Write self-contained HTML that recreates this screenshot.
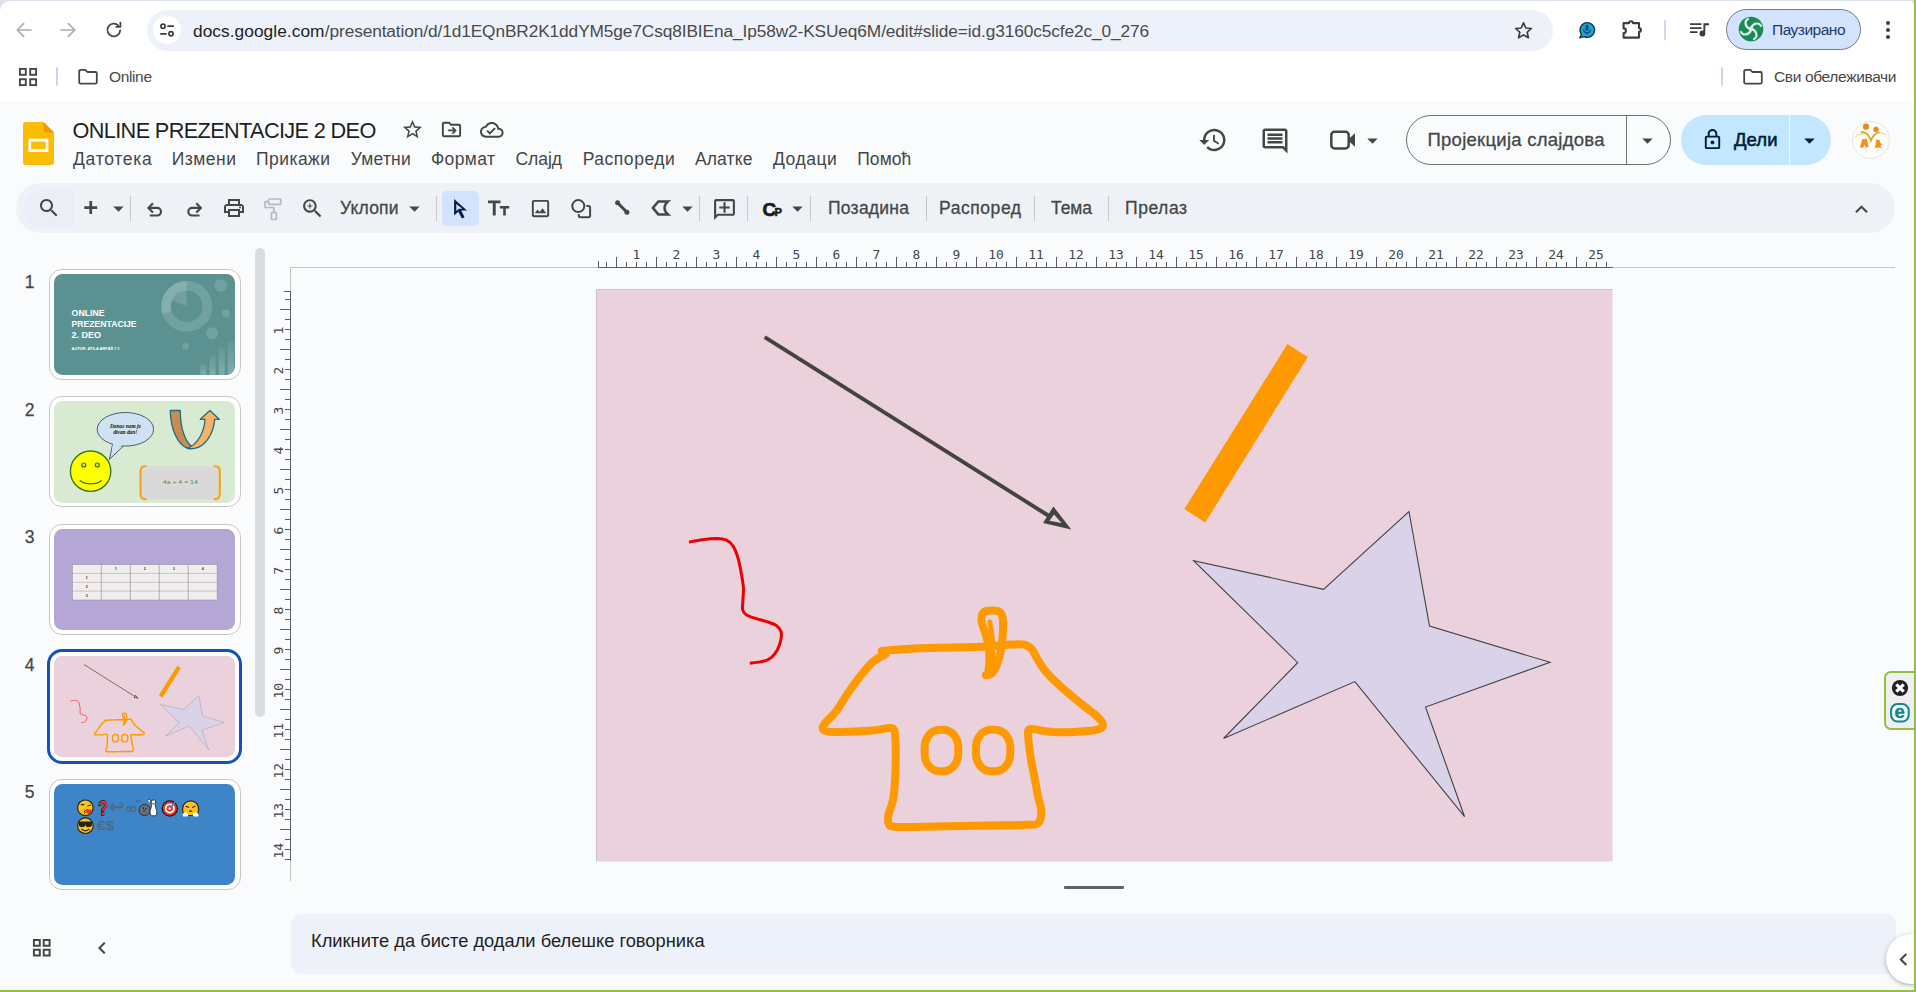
<!DOCTYPE html>
<html lang="sr">
<head>
<meta charset="utf-8">
<title>ONLINE PREZENTACIJE 2 DEO</title>
<style>
*{box-sizing:border-box;margin:0;padding:0}
html,body{width:1916px;height:992px;overflow:hidden;background:#f9fbfd}
body{position:relative;font-family:"Liberation Sans",sans-serif;color:#1f1f1f}
.a{position:absolute}
.t{position:absolute;white-space:nowrap;font-family:"Liberation Sans",sans-serif}
svg{position:absolute;overflow:visible}
.sep{position:absolute;width:1px;background:#c7c7c7}
.mono{font-family:"DejaVu Sans Mono","Liberation Mono",monospace}
.fo{position:absolute;left:49px;width:191.5px;height:111px;border:1px solid #c9c6c6;border-radius:13px;background:#fff}
.fi{position:absolute;left:54.2px;width:181.2px;height:101.6px;border-radius:8.5px;overflow:hidden}
.fn{position:absolute;left:18.6px;-webkit-text-stroke:0.25px #444746;width:22px;text-align:center;font-size:17.5px;line-height:22px;color:#444746}
</style>
</head>
<body>
<!-- ===== Browser chrome ===== -->
<div class="a" style="left:0;top:0;width:1916px;height:102px;background:#dbe2ee"></div>
<div class="a" style="left:0;top:1px;width:1914px;height:101px;background:#fff;border-radius:10px 5px 0 0"></div>
<!-- nav arrows -->
<svg style="left:14px;top:20px;width:20px;height:20px" viewBox="0 0 20 20" fill="none" stroke="#a9acb1" stroke-width="1.7" stroke-linecap="round" stroke-linejoin="round"><path d="M17 10H3.4M9.6 3.6 3.2 10l6.4 6.4"/></svg>
<svg style="left:58px;top:20px;width:20px;height:20px" viewBox="0 0 20 20" fill="none" stroke="#a9acb1" stroke-width="1.7" stroke-linecap="round" stroke-linejoin="round"><path d="M3 10h13.6M10.4 3.6l6.4 6.4-6.4 6.4"/></svg>
<svg style="left:104px;top:20px;width:20px;height:20px" viewBox="0 0 20 20" fill="none" stroke="#474747" stroke-width="1.8" stroke-linecap="round" stroke-linejoin="round"><path d="M16.2 10.4a6.4 6.4 0 1 1-2-5.1"/><path d="M16.4 2.6v4.2h-4.2" /></svg>
<!-- omnibox -->
<div class="a" style="left:147px;top:9.5px;width:1406px;height:41px;border-radius:20.5px;background:#edf1fa"></div>
<div class="a" style="left:153px;top:16px;width:28px;height:28px;border-radius:14px;background:#fff"></div>
<svg style="left:157px;top:20px;width:20px;height:20px" viewBox="0 0 20 20" fill="none" stroke="#3c3c3c" stroke-width="1.7" stroke-linecap="round"><circle cx="6" cy="6.2" r="2.1"/><path d="M11 6.2h5.2"/><circle cx="14" cy="13.8" r="2.1"/><path d="M3.8 13.8H9"/></svg>
<span class="t" style="left:193.00px;top:20.30px;font-size:17.3px;line-height:22px;letter-spacing:0.058px;color:#1f1f1f;font-weight:400;">docs.google.com</span>
<span class="t" style="left:324.80px;top:20.30px;font-size:17.3px;line-height:22px;letter-spacing:-0.110px;color:#4a4a4a;font-weight:400;">/presentation/d/1d1EQnBR2K1ddYM5ge7Csq8IBIEna_Ip58w2-KSUeq6M/edit#slide=id.g3160c5cfe2c_0_276</span>
<!-- star -->
<svg style="left:1513px;top:19.5px;width:21px;height:21px" viewBox="0 0 24 24" fill="none" stroke="#3c3c3c" stroke-width="1.9" stroke-linejoin="round"><path d="M12 3.2l2.6 5.9 6.4.6-4.8 4.3 1.4 6.3L12 17l-5.6 3.3 1.4-6.3L3 9.7l6.4-.6z"/></svg>
<!-- extension 1 : mic bubble -->
<svg style="left:1574.9px;top:18px;width:24px;height:24px" viewBox="0 0 24 24"><path d="M6.3 16.200000000000003A7.3 7.3 0 1 1 9.1 18.6L4.7 19.900000000000002z" fill="#14a7c8" stroke="#16303f" stroke-width="1.3" stroke-linejoin="round"/><rect x="10.6" y="6.8" width="2.8" height="6" rx="1.4" fill="#12348c"/><path d="M8.700000000000001 11.4a3.3 3.3 0 0 0 6.6 0" fill="none" stroke="#12348c" stroke-width="1.1"/><path d="M12 14.700000000000001v1.9" stroke="#12348c" stroke-width="1.1"/></svg>
<!-- puzzle -->
<svg style="left:1619px;top:18px;width:24px;height:24px" viewBox="0 0 24 24" fill="none" stroke="#3c3c3c" stroke-width="2.1" stroke-linejoin="round"><path d="M4.6 5.1h5.500000000000001a1.9 1.9 0 0 1 3.8 0h6.1v5.000000000000001a1.9 1.9 0 0 1 0 3.8V19.6H4.6v-4.6a2.300000000000001 2.300000000000001 0 0 0 0-4.6z"/></svg>
<div class="a" style="left:1664px;top:20px;width:2px;height:20px;background:#ccd8ee;border-radius:1px"></div>
<!-- media control -->
<svg style="left:1687px;top:17px;width:24px;height:24px" viewBox="0 0 24 24" fill="#3c3c3c"><path d="M3 6.2h11.5v1.9H3zM3 10.2h11.5v1.9H3zM3 14.2h7.5v1.9H3z"/><path d="M16.4 6.2H22v2h-3.7v8.3a2.9 2.9 0 1 1-1.9-2.7z"/></svg>
<!-- profile pill -->
<div class="a" style="left:1726px;top:9px;width:135px;height:41px;border-radius:20.5px;background:#d3e3fd;border:1px solid #6c7a92"></div>
<svg style="left:1738px;top:16px;width:26px;height:26px" viewBox="-13 -13 26 26"><circle r="12.3" fill="#1a8a56"/><g fill="none" stroke="#d8f0e2" stroke-width="2.2" stroke-linecap="round"><path d="M0-1C2-6 8-7 10-3"/><path d="M1 0C6 2 7 8 3 10"/><path d="M0 1C-2 6-8 7-10 3"/><path d="M-1 0C-6-2-7-8-3-10"/></g><circle r="2.2" fill="#d8f0e2"/></svg>
<span class="t" style="left:1772.00px;top:19.50px;font-size:15.5px;line-height:20px;letter-spacing:-0.503px;color:#1b3a6b;font-weight:400;">Паузирано</span>

<svg style="left:1884px;top:18px;width:8px;height:24px" viewBox="0 0 8 24" fill="#3c3c3c"><circle cx="4" cy="5" r="2"/><circle cx="4" cy="12" r="2"/><circle cx="4" cy="19" r="2"/></svg>
<!-- bookmarks bar -->
<svg style="left:17px;top:66px;width:22px;height:22px" viewBox="0 0 22 22" fill="none" stroke="#474747" stroke-width="1.9"><rect x="2.9" y="2.9" width="5.9" height="5.9"/><rect x="13.2" y="2.9" width="5.9" height="5.9"/><rect x="2.9" y="13.2" width="5.9" height="5.9"/><rect x="13.2" y="13.2" width="5.9" height="5.9"/></svg>
<div class="a" style="left:56px;top:67px;width:2px;height:19px;background:#c9d7ee;border-radius:1px"></div>
<svg style="left:77px;top:66px;width:22px;height:22px" viewBox="0 0 22 22" fill="none" stroke="#474747" stroke-width="1.8" stroke-linejoin="round"><path d="M2.2 5.2a1.4 1.4 0 0 1 1.4-1.4h4.7l2.1 2.2h8a1.4 1.4 0 0 1 1.4 1.4v8.800000000000001a1.4 1.4 0 0 1-1.4 1.4H3.6a1.4 1.4 0 0 1-1.4-1.4z"/></svg>
<span class="t" style="left:109.00px;top:67.00px;font-size:15.5px;line-height:20px;letter-spacing:-0.361px;color:#474747;font-weight:400;">Online</span>
<div class="a" style="left:1721px;top:67px;width:2px;height:19px;background:#c9d7ee;border-radius:1px"></div>
<svg style="left:1742px;top:66px;width:22px;height:22px" viewBox="0 0 22 22" fill="none" stroke="#474747" stroke-width="1.8" stroke-linejoin="round"><path d="M2.2 5.2a1.4 1.4 0 0 1 1.4-1.4h4.7l2.1 2.2h8a1.4 1.4 0 0 1 1.4 1.4v8.8a1.4 1.4 0 0 1-1.4 1.4H3.6a1.4 1.4 0 0 1-1.4-1.4z"/></svg>
<span class="t" style="left:1774.00px;top:67.00px;font-size:15.5px;line-height:20px;letter-spacing:-0.351px;color:#474747;font-weight:400;">Сви обележивачи</span>
<!-- ===== App header ===== -->
<!-- Slides logo -->
<svg style="left:23px;top:122px;width:31px;height:43px" viewBox="0 0 31 43"><path d="M3 0h17.5L31 10.5V40a3 3 0 0 1-3 3H3a3 3 0 0 1-3-3V3a3 3 0 0 1 3-3z" fill="#fbbc04"/><path d="M20.5 0 31 10.500000000000001h-7.500000000000001a3 3 0 0 1-3-3z" fill="#f29900"/><path d="M5.4 16.8h20v13.200000000000001h-20zm2.700000000000001 2.700000000000001v7.800000000000001h14.6v-7.800000000000001z" fill="#fff" fill-rule="evenodd"/></svg>
<span class="t" style="left:72.50px;top:116.70px;font-size:21.7px;line-height:28px;letter-spacing:-0.631px;color:#1f1f1f;font-weight:400;">ONLINE PREZENTACIJE 2 DEO</span>
<svg style="left:400.5px;top:117.9px;width:23px;height:23px" viewBox="0 0 24 24" fill="#444746"><path d="M22 9.24l-7.19-.62L12 2 9.19 8.63 2 9.24l5.46 4.73L5.82 21 12 17.27 18.18 21l-1.63-7.03L22 9.240000000000002zM12 15.4l-3.76 2.27 1-4.28-3.32-2.88 4.38-.38L12 6.1l1.71 4.04 4.380000000000001.38-3.32 2.88 1 4.28L12 15.4z"/></svg>
<svg style="left:440px;top:118px;width:23px;height:23px" viewBox="0 0 24 24" fill="#444746"><path d="M20 6h-8l-2-2H4c-1.1 0-2 .9-2 2v12c0 1.1.9 2 2 2h16c1.1 0 2-.9 2-2V8c0-1.1-.9-2-2-2zm0 12H4V6h5.17l2 2H20v10z"/><path d="M13.6 16.9l3.9-3.9-3.9-3.9-1.3 1.3 1.7 1.7H8.5v1.8H14l-1.7 1.7z"/></svg>
<svg style="left:480px;top:118.4px;width:23.6px;height:23.6px" viewBox="0 0 24 24" fill="#444746"><path d="M19.35 10.04C18.67 6.59 15.64 4 12 4 9.11 4 6.6 5.64 5.35 8.04 2.34 8.36 0 10.91 0 14c0 3.31 2.69 6 6 6h13c2.76 0 5-2.24 5-5 0-2.64-2.05-4.78-4.65-4.96zM19 18H6c-2.21 0-4-1.79-4-4 0-2.05 1.53-3.76 3.56-3.97l1.07-.11.5-.95C8.08 7.14 9.94 6 12 6c2.62 0 4.88 1.86 5.39 4.43l.3 1.5 1.53.11c1.56.1 2.78 1.41 2.78 2.96 0 1.65-1.35 3-3 3zm-9-3.82l-2.09-2.09L6.5 13.5 10 17l6.01-6.01-1.41-1.41z"/></svg>
<!-- menus -->
<span class="t" style="left:73.00px;top:147.50px;font-size:17.5px;line-height:23px;letter-spacing:0.729px;color:#444746;font-weight:400;">Датотека</span>
<span class="t" style="left:171.80px;top:147.50px;font-size:17.5px;line-height:23px;letter-spacing:0.479px;color:#444746;font-weight:400;">Измени</span>
<span class="t" style="left:256.00px;top:147.50px;font-size:17.5px;line-height:23px;letter-spacing:0.443px;color:#444746;font-weight:400;">Прикажи</span>
<span class="t" style="left:350.70px;top:147.50px;font-size:17.5px;line-height:23px;letter-spacing:0.226px;color:#444746;font-weight:400;">Уметни</span>
<span class="t" style="left:430.90px;top:147.50px;font-size:17.5px;line-height:23px;letter-spacing:0.387px;color:#444746;font-weight:400;">Формат</span>
<span class="t" style="left:515.50px;top:147.50px;font-size:17.5px;line-height:23px;letter-spacing:-0.046px;color:#444746;font-weight:400;">Слајд</span>
<span class="t" style="left:582.70px;top:147.50px;font-size:17.5px;line-height:23px;letter-spacing:0.531px;color:#444746;font-weight:400;">Распореди</span>
<span class="t" style="left:694.90px;top:147.50px;font-size:17.5px;line-height:23px;letter-spacing:0.153px;color:#444746;font-weight:400;">Алатке</span>
<span class="t" style="left:773.00px;top:147.50px;font-size:17.5px;line-height:23px;letter-spacing:0.512px;color:#444746;font-weight:400;">Додаци</span>
<span class="t" style="left:857.20px;top:147.50px;font-size:17.5px;line-height:23px;letter-spacing:0.073px;color:#444746;font-weight:400;">Помоћ</span>
<!-- right header icons -->
<svg style="left:1197.5px;top:124.5px;width:30px;height:30px" viewBox="0 0 24 24" fill="#444746"><path d="M13 3c-4.97 0-9 4.03-9 9H1l3.89 3.89.07.14L9 12H6c0-3.87 3.13-7 7-7s7 3.13 7 7-3.13 7-7 7c-1.93 0-3.68-.79-4.94-2.06l-1.42 1.42C8.27 19.99 10.51 21 13 21c4.97 0 9-4.03 9-9s-4.03-9-9-9zm-1 5v5l4.28 2.54.72-1.21-3.5-2.08V8H12z"/></svg>
<svg style="left:1260px;top:125.5px;width:30px;height:30px" viewBox="0 0 24 24" fill="#444746"><path d="M21.99 4c0-1.1-.89-2-1.990000000000002-2H4c-1.1 0-2 .9-2 2v12c0 1.1.9 2 2 2h14l4 4-.01-18zM20 4v13.17L18.830000000000002 16H4V4h16zM6 12h12v2H6zm0-3h12v2H6zm0-3h12v2H6z"/></svg>
<svg style="left:1326px;top:125px;width:30px;height:30px" viewBox="0 0 30 30"><rect x="5.3" y="6.8" width="17.4" height="16.6" rx="3.2" fill="none" stroke="#444746" stroke-width="2.5"/><path d="M21.5 15 29 8.2v13.6z" fill="#444746"/></svg>
<svg style="left:1360px;top:127.5px;width:25px;height:25px" viewBox="0 0 24 24" fill="#444746"><path d="M7 10l5 5 5-5z"/></svg>
<!-- slideshow button -->
<div class="a" style="left:1406px;top:115px;width:265px;height:50px;border-radius:25px;border:1.2px solid #6d706f"></div>
<div class="a" style="left:1625.5px;top:115px;width:1px;height:50px;background:#747775"></div>
<span class="t" style="left:1427.50px;top:128.00px;font-size:18.5px;line-height:24px;letter-spacing:0.262px;color:#444746;font-weight:400;-webkit-text-stroke:0.3px #444746">Пројекција слајдова</span>
<svg style="left:1634.5px;top:127.5px;width:25px;height:25px" viewBox="0 0 24 24" fill="#444746"><path d="M7 10l5 5 5-5z"/></svg>
<!-- share button -->
<div class="a" style="left:1681px;top:115px;width:150px;height:50px;border-radius:25px;background:#c2e7ff"></div>
<div class="a" style="left:1788.5px;top:115px;width:1px;height:50px;background:#f3f9ff"></div>
<svg style="left:1701px;top:128.2px;width:23px;height:23px" viewBox="0 0 24 24" fill="#001d35"><path d="M18 8h-1V6c0-2.76-2.24-5-5-5S7 3.24 7 6v2H6c-1.1 0-2 .9-2 2v10c0 1.1.9 2 2 2h12c1.1 0 2-.9 2-2V10c0-1.1-.9-2-2-2zM9 6c0-1.660000000000001 1.34-3 3-3s3 1.34 3 3v2H9V6zm9 14H6V10h12v10zm-6-3c1.1 0 2-.9 2-2s-.9-2-2-2-2 .9-2 2 .9 2 2 2z"/></svg>
<span class="t" style="left:1734.00px;top:128.00px;font-size:18.5px;line-height:24px;letter-spacing:0.056px;color:#001d35;font-weight:400;-webkit-text-stroke:0.55px #001d35">Дели</span>
<svg style="left:1796.5px;top:127.5px;width:25px;height:25px" viewBox="0 0 24 24" fill="#001d35"><path d="M7 10l5 5 5-5z"/></svg>
<!-- avatar -->
<svg style="left:1851px;top:120px;width:40px;height:40px" viewBox="1851 120 40 40"><circle cx="1870.9" cy="139.9" r="18.4" fill="#fffefb" stroke="#e6e0da" stroke-width="0.9"/><g fill="#f18a12"><circle cx="1866" cy="126.7" r="3.1"/><circle cx="1876" cy="129.4" r="2.7"/><path d="M1862.4 139.200000000000003l4.200000000000001-.4 2 8.000000000000002-2.800000000000001.6-1.2-2.600000000000001-1.400000000000001 3-3.400000000000001-.4z" fill-opacity=".95"/><path d="M1876.4 139.6l3.2.4.8 3.2 2.200000000000001.8-2 1.400000000000001.6 2.800000000000001-3.2-.8-3.000000000000001.8z" fill-opacity=".95"/></g><path d="M1861.6 131.8c4.200000000000001.2 7.6 3.2 9.4 8.8 1.6-5 4.4-7.4 8.000000000000002-8.200000000000001" fill="none" stroke="#dca21a" stroke-width="1.7" stroke-linecap="round"/><path d="M1855.6 136.6c3-2.600000000000001 6.800000000000001-3.600000000000001 10.4-2.400000000000001M1886 135c-2.800000000000001-2.200000000000001-6.200000000000001-2.600000000000001-9.4-1.200000000000001" fill="none" stroke="#f3c79a" stroke-width="1.1" stroke-linecap="round" stroke-opacity=".8"/><path d="M1865.6 148.200000000000003l.8 4.400000000000001M1877.6 149l-.8 3.600000000000001M1881.2 147.200000000000003l1.600000000000001 3" fill="none" stroke="#ead9e6" stroke-width="1" stroke-linecap="round"/></svg>
<!-- ===== Toolbar ===== -->
<div class="a" style="left:16px;top:183px;width:1879px;height:50px;border-radius:25px;background:#eef2f7"></div>
<div class="a" style="left:22.5px;top:189.5px;width:51px;height:37.5px;border-radius:18.75px 5px 5px 18.75px;background:#eaeff7"></div>
<svg style="left:37.4px;top:196.2px;width:24px;height:24px" viewBox="0 0 24 24" fill="#444746"><path d="M15.5 14h-.79l-.28-.27C15.41 12.59 16 11.11 16 9.5 16 5.91 13.09 3 9.5 3S3 5.91 3 9.5 5.91 16 9.5 16c1.61 0 3.09-.59 4.23-1.57l.27.28v.79l5 4.99L20.49 19l-4.99-5zm-6 0C7.01 14 5 11.99 5 9.5S7.01 5 9.5 5 14 7.01 14 9.5 11.99 14 9.5 14z"/></svg>
<svg style="left:78px;top:195px;width:25px;height:25px" viewBox="78 195 25 25" fill="#444746"><path d="M84.3 206.2h5.1v-5.1h2.7v5.1h5.1v2.7h-5.1v5.1h-2.7v-5.1h-5.1z"/></svg>
<svg style="left:105.7px;top:196px;width:25px;height:25px" viewBox="0 0 24 24" fill="#444746"><path d="M7 10l5 5 5-5z"/></svg>
<div class="sep" style="left:130px;top:196px;height:25px"></div>
<!-- undo / redo -->
<svg style="left:140px;top:195px;width:70px;height:26px" viewBox="140 195 70 26" fill="none" stroke="#444746" stroke-width="2.1" stroke-linejoin="miter"><path d="M153 203.2 148.400000000000002 207.9 153 212.6"/><path d="M149 207.9h8.200000000000001a3.8 3.8 0 0 1 0 7.6H149.8"/><path d="M196.3 203.2 200.9 207.9 196.3 212.6"/><path d="M200.3 207.9h-8.200000000000001a3.8 3.8 0 0 0 0 7.6h7.4"/></svg>
<svg style="left:221.7px;top:196.2px;width:24px;height:24px" viewBox="0 0 24 24" fill="#444746"><path d="M19 8h-1V3H6v5H5c-1.66 0-3 1.34-3 3v6h4v4h12v-4h4v-6c0-1.66-1.34-3-3-3zM8 5h8v3H8V5zm8 12v2H8v-4h8v2zm2-2v-2H6v2H4v-4c0-.55.45-1 1-1h14c.55 0 1 .45 1 1v4h-2z"/><circle cx="18" cy="11.5" r="1"/></svg>
<!-- paint format (disabled) -->
<svg style="left:260px;top:195px;width:26px;height:28px" viewBox="260 195 26 28" fill="none" stroke="#b7babf" stroke-width="1.7" stroke-linejoin="round"><rect x="268.6" y="199" width="12.2" height="5.4" rx="1"/><path d="M268.6 201.7h-3.600000000000001v5.800000000000001h8.8v5.000000000000001"/><rect x="271.4" y="212.7" width="5.000000000000001" height="6.800000000000001" rx=".8"/></svg>
<svg style="left:300px;top:195.5px;width:25px;height:25px" viewBox="0 0 24 24" fill="#444746"><path d="M15.5 14h-.79l-.28-.27C15.41 12.59 16 11.11 16 9.5 16 5.91 13.09 3 9.5 3S3 5.910000000000001 3 9.5 5.91 16 9.5 16c1.61 0 3.09-.59 4.23-1.57l.27.28v.79l5 4.99L20.49 19l-4.99-5zm-6 0C7.01 14 5 11.99 5 9.5S7.01 5 9.5 5 14 7.01 14 9.5 11.99 14 9.5 14zm.5-7H9v2H7v1h2v2h1v-2h2V9h-2z"/></svg>
<span class="t" style="left:340.00px;top:196.50px;font-size:17.5px;line-height:23px;letter-spacing:0.185px;color:#444746;font-weight:400;-webkit-text-stroke:0.3px #444746">Уклопи</span>
<svg style="left:401.5px;top:196px;width:25px;height:25px" viewBox="0 0 24 24" fill="#444746"><path d="M7 10l5 5 5-5z"/></svg>
<div class="sep" style="left:436px;top:196px;height:25px"></div>
<!-- select (active) -->
<div class="a" style="left:442px;top:190.5px;width:37px;height:35.5px;border-radius:5px;background:#d3e3fd"></div>
<svg style="left:449px;top:196px;width:24px;height:24px" viewBox="449 196 24 24"><path d="M454.1 198.9V215.6L458.3 211.8 461.9 218.6 464.6 217.2 461.2 210.5H467z" fill="#041e49"/><path d="M456.3 203.9V211L459 208.7H462.400000000000003z" fill="#d3e3fd"/></svg>
<!-- text box Tt -->
<svg style="left:486px;top:196px;width:25px;height:25px" viewBox="0 0 25 25" fill="#444746"><path d="M2 4.5h12.5v2.700000000000001H9.700000000000001V19.5H6.800000000000001V7.2H2zM13.8 10h9.4v2.5h-3.400000000000001v7h-2.600000000000001v-7H13.8z"/></svg>
<svg style="left:528.5px;top:197.1px;width:23px;height:23px" viewBox="0 0 24 24" fill="#444746"><path d="M19 5v14H5V5h14m0-2H5c-1.1 0-2 .9-2 2v14c0 1.1.9 2 2 2h14c1.1 0 2-.9 2-2V5c0-1.1-.9-2-2-2zm-4.86 8.86l-3 3.87L9 13.14 6 17h12l-3.86-5.14z"/></svg>
<!-- shapes -->
<svg style="left:569px;top:196px;width:25px;height:25px" viewBox="0 0 25 25" fill="none" stroke="#444746" stroke-width="2"><circle cx="9.3" cy="10.1" r="6"/><path d="M17.4 9.9h2.2a1.500000000000001 1.500000000000001 0 0 1 1.500000000000001 1.500000000000001v8.4a1.500000000000001 1.500000000000001 0 0 1-1.500000000000001 1.500000000000001H11.3a1.500000000000001 1.500000000000001 0 0 1-1.500000000000001-1.500000000000001V18"/></svg>
<!-- line -->
<svg style="left:609.5px;top:195.5px;width:25px;height:25px" viewBox="0 0 25 25" fill="#444746" stroke="#444746"><path d="M7.3 6.500000000000001 17.200000000000003 16.500000000000004" stroke-width="3.1" fill="none"/><circle cx="7.6" cy="6.8" r="2.5" stroke="none"/><circle cx="16.9" cy="16.2" r="2.5" stroke="none"/></svg>
<!-- special shape -->
<svg style="left:648px;top:195.5px;width:25px;height:25px" viewBox="0 0 25 25" fill="none" stroke="#444746" stroke-width="2.5" stroke-linejoin="miter"><path d="M20.000000000000004 5.4H10.3L4.9 11.9l5.4 6.500000000000001h9.700000000000001c-4.600000000000001-4-4.600000000000001-9 0-13z"/></svg>
<svg style="left:674.5px;top:196px;width:25px;height:25px" viewBox="0 0 24 24" fill="#444746"><path d="M7 10l5 5 5-5z"/></svg>
<div class="sep" style="left:699.3px;top:196px;height:25px"></div>
<!-- add comment -->
<svg style="left:711.5px;top:196.5px;width:25px;height:25px" viewBox="0 0 24 24" fill="#444746"><path d="M2 4c0-1.1.9-2 2-2h16c1.1 0 2 .9 2 2v12c0 1.1-.9 2-2 2H6l-4 4V4zm2 13.17L5.170000000000001 16H20V4H4v13.17zM11 5h2v4h4v2h-4v4h-2v-4H7V9h4z"/></svg>
<div class="sep" style="left:746.6px;top:196px;height:25px"></div>
<span class="t" style="left:762.5px;top:198.2px;font-size:18.8px;line-height:24px;font-weight:700;color:#1b1b1b;letter-spacing:-1.6px;-webkit-text-stroke:0.7px #1b1b1b">C<span style="font-size:11.2px;letter-spacing:0;-webkit-text-stroke:0.6px #1b1b1b">P</span></span>
<svg style="left:784.5px;top:196px;width:25px;height:25px" viewBox="0 0 24 24" fill="#444746"><path d="M7 10l5 5 5-5z"/></svg>
<div class="sep" style="left:809.8px;top:196px;height:25px"></div>
<span class="t" style="left:828.00px;top:196.50px;font-size:17.5px;line-height:23px;letter-spacing:0.249px;color:#444746;font-weight:400;-webkit-text-stroke:0.3px #444746">Позадина</span>
<div class="sep" style="left:925.5px;top:196px;height:25px"></div>
<span class="t" style="left:939.00px;top:196.50px;font-size:17.5px;line-height:23px;letter-spacing:0.560px;color:#444746;font-weight:400;-webkit-text-stroke:0.3px #444746">Распоред</span>
<div class="sep" style="left:1034px;top:196px;height:25px"></div>
<span class="t" style="left:1051.00px;top:196.50px;font-size:17.5px;line-height:23px;letter-spacing:-0.068px;color:#444746;font-weight:400;-webkit-text-stroke:0.3px #444746">Тема</span>
<div class="sep" style="left:1108px;top:196px;height:25px"></div>
<span class="t" style="left:1125.00px;top:196.50px;font-size:17.5px;line-height:23px;letter-spacing:0.553px;color:#444746;font-weight:400;-webkit-text-stroke:0.3px #444746">Прелаз</span>
<svg style="left:1848.5px;top:196.5px;width:25px;height:25px" viewBox="0 0 24 24" fill="#444746"><path d="M7.41 15.41L12 10.83l4.59 4.58L18 14l-6-6-6 6z"/></svg>
<!-- ===== Rulers ===== -->
<svg style="left:0;top:0;width:1916px;height:992px" viewBox="0 0 1916 992" shape-rendering="crispEdges">
<defs>
<pattern id="hticks" x="596" y="257" width="40" height="11" patternUnits="userSpaceOnUse"><path d="M10.5 5v6M20.5 0v11M30.5 5v6M0.5 5v6" stroke="#5b5f63" stroke-width="1" fill="none"/></pattern>
<pattern id="vticks" x="280" y="289" width="11" height="40" patternUnits="userSpaceOnUse"><path d="M5 10.5h6M0 20.5h11M5 30.5h6M5 0.5h6" stroke="#5b5f63" stroke-width="1" fill="none"/></pattern>
</defs>
<path d="M291 267.5H1895M290.5 267v614" stroke="#c4c7c5" stroke-width="1" fill="none"/>
<path d="M598 267.5H1613" stroke="#5b5f63" stroke-width="1" fill="none"/>
<path d="M290.5 291V861" stroke="#5b5f63" stroke-width="1" fill="none"/>
<rect x="601" y="257" width="1011" height="11" fill="url(#hticks)"/>
<path d="M598.5 261v6" stroke="#5b5f63" stroke-width="1"/>
<rect x="280" y="294" width="11" height="566" fill="url(#vticks)"/>
<path d="M284 291.5h6" stroke="#5b5f63" stroke-width="1"/>
</svg>
<svg style="left:0;top:0;width:1916px;height:992px" viewBox="0 0 1916 992" class="mono" font-size="12.9" fill="#444746" text-anchor="middle">
<text x="636.5" y="258.7">1</text>
<text x="676.5" y="258.7">2</text>
<text x="716.5" y="258.7">3</text>
<text x="756.5" y="258.7">4</text>
<text x="796.5" y="258.7">5</text>
<text x="836.5" y="258.7">6</text>
<text x="876.5" y="258.7">7</text>
<text x="916.5" y="258.7">8</text>
<text x="956.5" y="258.7">9</text>
<text x="996.0" y="258.7">10</text>
<text x="1036.0" y="258.7">11</text>
<text x="1076.0" y="258.7">12</text>
<text x="1116.0" y="258.7">13</text>
<text x="1156.0" y="258.7">14</text>
<text x="1196.0" y="258.7">15</text>
<text x="1236.0" y="258.7">16</text>
<text x="1276.0" y="258.7">17</text>
<text x="1316.0" y="258.7">18</text>
<text x="1356.0" y="258.7">19</text>
<text x="1396.0" y="258.7">20</text>
<text x="1436.0" y="258.7">21</text>
<text x="1476.0" y="258.7">22</text>
<text x="1516.0" y="258.7">23</text>
<text x="1556.0" y="258.7">24</text>
<text x="1596.0" y="258.7">25</text>
<text transform="translate(283.2 330.7) rotate(-90)">1</text>
<text transform="translate(283.2 370.7) rotate(-90)">2</text>
<text transform="translate(283.2 410.7) rotate(-90)">3</text>
<text transform="translate(283.2 450.7) rotate(-90)">4</text>
<text transform="translate(283.2 490.7) rotate(-90)">5</text>
<text transform="translate(283.2 530.7) rotate(-90)">6</text>
<text transform="translate(283.2 570.7) rotate(-90)">7</text>
<text transform="translate(283.2 610.7) rotate(-90)">8</text>
<text transform="translate(283.2 650.7) rotate(-90)">9</text>
<text transform="translate(283.2 690.7) rotate(-90)">10</text>
<text transform="translate(283.2 730.7) rotate(-90)">11</text>
<text transform="translate(283.2 770.7) rotate(-90)">12</text>
<text transform="translate(283.2 810.7) rotate(-90)">13</text>
<text transform="translate(283.2 850.7) rotate(-90)">14</text>
</svg>
<!-- ===== Main slide ===== -->
<svg style="left:0;top:0;width:1916px;height:992px" viewBox="0 0 1916 992">
<defs>
<g id="slideart">
<rect x="596.5" y="289.5" width="1016" height="572" fill="#ead1dc"/>
<!-- arrow -->
<path d="M764.7 337.2 1049 516" stroke="#434343" stroke-width="3.9" fill="none"/>
<path d="M1071.3 529.4 1053.4 506.5 1043 523z" fill="#434343"/>
<path d="M1061.6 523.1 1054 514.4 1049.5 520.8z" fill="#ead1dc"/>
<!-- orange bar -->
<path d="M1287.4 344.1 1307.8 356.9 1205.2 522.6 1184.3 509z" fill="#ff9900"/>
<!-- star -->
<path d="M1409 511.500000000000001 1429.5 626 1550 662.3 1425.5 707 1464.6 816.7 1354.9 681.6 1223.5 738.5 1297.7 662.7 1193.6 560.6 1323.5 589.3z" fill="#d9d2e9" stroke="#434343" stroke-width="1.1" stroke-linejoin="miter"/>
<!-- red squiggle -->
<path d="M689.0 542.1C691.2 541.7 697.6 540.3 702.3 539.7C706.9 539.1 712.7 538.5 716.8 538.5C720.8 538.6 723.8 539.0 726.5 540.2C729.1 541.4 731.0 543.0 732.9 545.8C734.8 548.6 736.4 552.8 737.7 557.1C739.1 561.4 740.0 566.5 741.0 571.6C741.9 576.7 743.1 582.9 743.4 587.7C743.7 592.6 743.0 597.0 742.9 600.6C742.8 604.3 742.1 607.2 742.6 609.5C743.1 611.8 743.7 612.9 745.8 614.4C748.0 615.8 752.0 617.2 755.5 618.4C759.0 619.6 763.3 620.4 766.8 621.6C770.3 622.8 774.0 623.8 776.5 625.6C778.9 627.5 780.8 629.8 781.3 632.9C781.8 636.0 780.8 640.7 779.7 644.2C778.6 647.7 776.7 651.3 774.8 653.9C773.0 656.4 770.8 658.2 768.4 659.5C766.0 660.9 763.4 661.3 760.3 661.9C757.2 662.6 751.6 663.0 749.8 663.2" stroke="#ec0000" stroke-width="3" fill="none" stroke-linecap="butt"/>
<!-- house -->
<g stroke="#ff9900" stroke-width="8" fill="none" stroke-linecap="round" stroke-linejoin="round">
<path d="M881.8 650.9C886.7 650.6 899.7 649.3 910.8 648.7C921.9 648.1 936.4 647.8 948.6 647.4C960.8 647.1 973.4 647.1 983.9 646.7C994.4 646.2 1004.9 645.0 1011.6 644.6C1018.3 644.3 1020.9 643.9 1024.2 644.6C1027.6 645.4 1029.7 647.0 1031.8 649.2C1033.9 651.4 1034.9 654.9 1036.8 658.0C1038.7 661.2 1040.6 664.7 1043.1 668.1C1045.6 671.4 1048.8 674.9 1051.9 678.2C1055.1 681.4 1058.2 684.4 1062.0 687.7C1065.8 691.1 1070.4 694.9 1074.6 698.3C1078.8 701.8 1083.4 705.4 1087.2 708.4C1091.0 711.4 1094.7 713.9 1097.3 716.5C1099.9 719.1 1102.4 722.0 1102.8 724.0C1103.3 726.1 1102.4 727.6 1099.8 728.8C1097.2 730.0 1093.5 730.5 1087.2 731.1C1080.9 731.7 1069.2 732.3 1062.0 732.3C1054.9 732.3 1049.8 731.6 1044.4 731.1C1039.0 730.5 1032.4 728.2 1029.8 729.1C1027.1 729.9 1028.1 731.6 1028.2 736.1C1028.4 740.7 1029.5 749.6 1030.5 756.3C1031.5 763.0 1033.0 769.7 1034.3 776.5C1035.6 783.2 1036.9 790.7 1038.1 796.6C1039.3 802.5 1041.4 807.3 1041.4 811.7C1041.4 816.1 1040.5 820.9 1038.1 823.1C1035.6 825.3 1035.3 824.4 1026.7 824.8C1018.1 825.3 1001.5 825.3 986.4 825.6C971.3 825.8 951.1 826.1 936.0 826.4C920.9 826.6 903.6 827.4 895.7 826.9C887.8 826.3 889.8 825.2 888.6 823.1C887.5 821.0 887.9 818.2 888.6 814.3C889.4 810.3 892.1 805.4 893.2 799.1C894.3 792.8 894.8 783.6 895.2 776.5C895.6 769.3 895.7 763.0 895.7 756.3C895.7 749.6 895.8 740.8 895.2 736.1C894.6 731.4 895.6 729.0 891.9 728.1C888.2 727.1 880.4 730.0 873.0 730.6C865.7 731.2 855.4 731.7 847.8 731.8C840.2 732.0 831.8 732.2 827.6 731.6C823.4 731.0 822.8 729.7 822.6 728.1C822.4 726.4 824.1 724.4 826.4 721.5C828.7 718.7 832.9 715.6 836.5 710.9C840.0 706.2 843.8 699.1 847.8 693.3C851.8 687.5 856.2 681.4 860.4 676.1C864.6 670.9 868.8 665.4 873.0 661.8C877.2 658.1 883.5 655.5 885.6 654.2"/>
<path d="M987.9 675.1C988.2 672.7 989.4 665.5 989.4 660.5C989.5 655.6 989.1 650.0 988.4 645.4C987.7 640.8 986.3 636.8 985.2 632.8C984.0 628.8 981.9 624.8 981.6 621.5C981.3 618.1 981.7 614.4 983.4 612.6C985.1 610.8 989.1 610.6 992.0 610.6C994.8 610.6 998.7 610.8 1000.5 612.6C1002.4 614.4 1002.7 617.3 1003.0 621.5C1003.4 625.7 1003.0 632.6 1002.5 637.8C1002.1 643.1 1001.4 648.1 1000.3 653.0C999.2 657.8 997.5 663.4 996.0 666.8C994.5 670.3 993.1 672.2 991.5 673.6C989.8 675.0 986.8 674.9 985.9 675.1"/>
<path d="M989.8 622c3 14 4 32 2 50" stroke-width="5"/>
<rect x="924.6" y="729.7" width="33.7" height="41.6" rx="15" ry="18"/>
<rect x="975.9" y="729.7" width="34.4" height="41.6" rx="15" ry="18"/>
</g>
</g>
</defs>
<use href="#slideart"/>
<path d="M596.5 861V289.5H1612.500000000000002" stroke="#c6c3c7" stroke-width="1" fill="none"/>
</svg>
<!-- notes drag handle -->
<div class="a" style="left:1064px;top:885.6px;width:60px;height:3px;background:#5f6368;border-radius:1px"></div>
<!-- speaker notes -->
<div class="a" style="left:291px;top:914px;width:1604.5px;height:59.5px;border-radius:10px;background:#ecf1fa"></div>
<span class="t" style="left:311.00px;top:929.00px;font-size:18.3px;line-height:24px;letter-spacing:0.001px;color:#1f1f1f;font-weight:400;">Кликните да бисте додали белешке говорника</span>
<!-- ===== Filmstrip ===== -->
<div class="fn" style="top:271px">1</div>
<div class="fn" style="top:398.5px">2</div>
<div class="fn" style="top:526px">3</div>
<div class="fn" style="top:653.5px">4</div>
<div class="fn" style="top:781px">5</div>
<div class="fo" style="top:268.7px"></div>
<div class="fo" style="top:396.2px"></div>
<div class="fo" style="top:523.7px"></div>
<div class="a" style="left:47.3px;top:648.8px;width:195px;height:115.2px;border:3.2px solid #1550c0;border-radius:15px;background:#fff"></div>
<div class="fo" style="top:778.7px"></div>

<!-- thumb 1 -->
<div class="fi" style="top:273.5px;background:#5b9291">
<svg style="left:0;top:0;width:181.2px;height:101.6px" viewBox="54.2 273.5 181.2 101.6">
<circle cx="186.9" cy="305.9" r="20.6" fill="none" stroke="#8ab4b2" stroke-opacity=".48" stroke-width="9.6"/>
<path d="M186.9 305.9V290.2A15.700000000000001 15.700000000000001 0 0 0 172.6 299.6z" fill="#8ab4b2" fill-opacity=".45"/>
<path d="M186.9 285.3A20.6 20.6 0 0 0 167.3 312.3" fill="none" stroke="#a8c8c6" stroke-opacity=".35" stroke-width="9.8"/>
<circle cx="221" cy="285" r="6.2" fill="#8ab4b2" fill-opacity=".48"/>
<circle cx="226" cy="313" r="4" fill="#8ab4b2" fill-opacity=".48"/>
<circle cx="212.4" cy="332.7" r="6" fill="#8ab4b2" fill-opacity=".48"/>
<circle cx="185.6" cy="345.8" r="3.4" fill="#8ab4b2" fill-opacity=".48"/>
<defs><linearGradient id="barg" x1="0" y1="0" x2="0" y2="1"><stop offset="0" stop-color="#9cc0be" stop-opacity=".12"/><stop offset="1" stop-color="#9cc0be" stop-opacity=".6"/></linearGradient></defs><g fill="url(#barg)"><rect x="200.5" y="363.500000000000001" width="6" height="12"/><rect x="209.8" y="355" width="6" height="21"/><rect x="219" y="348" width="6" height="28"/><rect x="228" y="341" width="6.500000000000001" height="35"/></g>
<g font-family="Liberation Sans, sans-serif" font-weight="700" fill="#fff">
<text x="71.8" y="315.5" font-size="8.700000000000001" textLength="33" lengthAdjust="spacingAndGlyphs">ONLINE</text>
<text x="71.8" y="326.5" font-size="8.700000000000001" textLength="65" lengthAdjust="spacingAndGlyphs">PREZENTACIJE</text>
<text x="71.8" y="337.5" font-size="8.700000000000001" textLength="29.5" lengthAdjust="spacingAndGlyphs">2. DEO</text>
<text x="71.8" y="350" font-size="3.9" textLength="48" lengthAdjust="spacingAndGlyphs">AUTOR: ATILA ARPÁŠ 7.1</text>
</g>
</svg>
</div>

<!-- thumb 2 -->
<div class="fi" style="top:401px;background:#d9ead3">
<svg style="left:0;top:0;width:181.2px;height:101.6px" viewBox="54.2 401 181.2 101.6">
<path d="M112.9 443.7 109.6 459.4 124 445.7" fill="#cfe2f3" stroke="#4b5d6b" stroke-width="1"/>
<ellipse cx="125.6" cy="429.3" rx="28.2" ry="16.8" fill="#cfe2f3" stroke="#4b5d6b" stroke-width="1"/>
<path d="M113.4 443.2 112 449.5 122.8 445.4z" fill="#cfe2f3"/>
<g font-family="Liberation Serif, serif" font-style="italic" font-weight="700" fill="#111" text-anchor="middle" font-size="5.2">
<text x="125.6" y="428" textLength="31" lengthAdjust="spacingAndGlyphs">Danas nam je</text>
<text x="125.6" y="434.5" textLength="24" lengthAdjust="spacingAndGlyphs">divan dan!</text>
</g>
<circle cx="90.8" cy="471.2" r="20.2" fill="#ffff00" stroke="#38761d" stroke-width="1.4"/>
<circle cx="84" cy="465" r="2" fill="#e6e619" stroke="#38761d" stroke-width="1.2"/>
<circle cx="97.500000000000001" cy="465" r="2" fill="#e6e619" stroke="#38761d" stroke-width="1.2"/>
<path d="M80 480.500000000000001c6 4.500000000000001 16 4.500000000000001 22 0" fill="none" stroke="#38761d" stroke-width="1.4"/>
<!-- u-turn arrow -->
<path d="M170.500000000000003 410.500000000000001h10c0 18 5 33 13.5 37.5-1.5.6-4 .6-6 .3-10-3-17.5-20-17.5-37.800000000000004z" fill="#c98b52" stroke="#1c6e7d" stroke-width="1.3" stroke-linejoin="round"/>
<path d="M187.5 448.3c11-4 17-17 17.8-29h-4.800000000000001l9.600000000000001-8.800000000000001 9.400000000000002 8.800000000000001h-4.700000000000001c-.8 14-9 27-20 29.000000000000004-2.500000000000001.4-5.500000000000001.4-7.300000000000001 0z" fill="#f6b26b" stroke="#1c6e7d" stroke-width="1.3" stroke-linejoin="round"/>
<!-- bracket box -->
<rect x="142.5" y="466" width="76" height="33.4" rx="4" fill="#d9d9d9"/>
<path d="M146.8 466c-5 0-6 2-6 6.500000000000001v20.400000000000002c0 4.500000000000001 1 6.500000000000001 6 6.500000000000001M214 466c5 0 6 2 6 6.500000000000001v20.400000000000002c0 4.500000000000001-1 6.500000000000001-6 6.500000000000001" fill="none" stroke="#f6a21e" stroke-width="2.2"/>
<text x="180.500000000000003" y="484" font-family="Liberation Sans, sans-serif" font-size="5.2" fill="#5b8a4a" text-anchor="middle" textLength="35" lengthAdjust="spacingAndGlyphs">4a + 4 = 14</text>
</svg>
</div>

<!-- thumb 3 -->
<div class="fi" style="top:528.5px;background:#b4a7d6">
<svg style="left:0;top:0;width:181.2px;height:101.6px" viewBox="54.2 528.5 181.2 101.6">
<rect x="72.6" y="564.1" width="144.70000000000002" height="35.4" fill="#efefef"/>
<path d="M72.6 572.9h144.70000000000002M72.6 581.8h144.70000000000002M72.6 590.6h144.70000000000002" stroke="#c98a96" stroke-width=".5" fill="none"/>
<path d="M101.5 564.1v35.4M130.5 564.1v35.4M159.4 564.1v35.4M188.4 564.1v35.4" stroke="#6f6f74" stroke-width=".5" fill="none"/>
<rect x="72.6" y="564.1" width="144.70000000000002" height="35.4" fill="none" stroke="#8e8794" stroke-width=".5"/>
<g font-family="Liberation Sans, sans-serif" font-weight="700" font-size="3.6" fill="#333" text-anchor="middle">
<text x="116" y="569.8">1</text><text x="145" y="569.8">2</text><text x="174" y="569.8">3</text><text x="203" y="569.8">4</text>
<text x="87" y="578.8">1</text><text x="87" y="587.6">2</text><text x="87" y="596.4">3</text>
</g>
</svg>
</div>

<!-- thumb 4 (current slide) -->
<div class="fi" style="top:655.8px;height:101.4px;background:#ead1dc">
<svg style="left:0;top:0;width:181.2px;height:101.9px" viewBox="596.5 289.5 1016 571.5" preserveAspectRatio="none"><use href="#slideart"/></svg>
</div>

<!-- thumb 5 -->
<div class="fi" style="top:783.5px;background:#3d85c6">
<svg style="left:0;top:0;width:181.2px;height:101.6px" viewBox="54.2 783.5 181.2 101.6">
<!-- kiss face -->
<circle cx="85.6" cy="807.3" r="7.8" fill="#fcc21b" stroke="#2b2410" stroke-width="1.2"/>
<path d="M81.2 804.6c1-.9 2.300000000000001-.9 3.2 0" stroke="#2b2410" stroke-width="1.2" fill="none"/><path d="M87.6 805.6l3.600000000000001-1.2" stroke="#2b2410" stroke-width="1" fill="none"/>
<path d="M89.2 809.6c.8-1.500000000000001 2.900000000000001-1.2 2.700000000000001.6.1 1.6-1.7 2.700000000000001-3.2 3.4-1.6-.8-3.000000000000001-2.1-2.600000000000001-3.8.4-1.500000000000001 2.500000000000001-1.6 3.100000000000001-.2z" fill="#e8352b"/>
<path d="M84.2 809.2c1.6.4 1.500000000000001 1.500000000000001.3 1.9 1.4.4 1.400000000000001 1.600000000000001-.2 2" stroke="#2b2410" stroke-width=".8" fill="none"/>
<!-- question mark -->
<text x="103.3" y="815" font-family="Liberation Sans, sans-serif" font-weight="700" font-size="20" fill="#d8352a" stroke="#2b1410" stroke-width="1.3" text-anchor="middle" paint-order="stroke" textLength="9.5" lengthAdjust="spacingAndGlyphs">?</text>
<text x="117" y="812.6" font-family="DejaVu Sans, sans-serif" font-size="18.5" fill="#4c6a8a" stroke="#4c6a8a" stroke-width=".35" text-anchor="middle">↩</text>
<text x="130.8" y="813.2" font-family="DejaVu Sans, sans-serif" font-size="15.5" fill="#4c6a8a" stroke="#4c6a8a" stroke-width=".35" text-anchor="middle">∞</text>
<text x="138.5" y="809.5" font-family="DejaVu Sans, sans-serif" font-size="13" fill="#4c6a8a" stroke="#4c6a8a" stroke-width=".35" text-anchor="middle">˜</text>
<!-- bowling -->
<circle cx="144.8" cy="809.500000000000001" r="5.6" fill="#6b6e74" stroke="#1f1f1f" stroke-width=".8"/>
<circle cx="143.500000000000003" cy="807.6" r=".8" fill="#222"/><circle cx="146" cy="808.2" r=".8" fill="#222"/><circle cx="144.3" cy="810.2" r=".8" fill="#222"/>
<path d="M151.6 800.2c1.500000000000001-1 3-1 4.000000000000001 0 .6 2-.4 3.500000000000001-.2 5 .3 2.500000000000001 1.6 4 1.6 6.500000000000001 0 1.500000000000001-.6 2.700000000000001-1.200000000000001 3.600000000000001h-4.400000000000001c-.7-1-1.200000000000001-2.200000000000001-1.200000000000001-3.600000000000001 0-2.500000000000001 1.3-4 1.6-6.500000000000001.2-1.500000000000001-.8-3-.2-5z" fill="#fff" stroke="#1f1f1f" stroke-width=".8"/>
<path d="M151.5 803.2h4.2" stroke="#d8352a" stroke-width="1.1"/>
<path d="M148 799.500000000000001c.8-.7 2-.7 2.700000000000001 0 .4 1.4-.3 2.400000000000001-.2 3.500000000000001" fill="#fff" stroke="#1f1f1f" stroke-width=".7"/>
<!-- dart -->
<circle cx="170" cy="808" r="7.6" fill="#e03a2f" stroke="#2b1410" stroke-width="1.2"/>
<circle cx="170" cy="808" r="5" fill="#fff"/><circle cx="170" cy="808" r="3.2" fill="#e03a2f"/><circle cx="170" cy="808" r="1.3" fill="#fff"/>
<path d="M170.500000000000003 807.500000000000001l5.500000000000001-6.500000000000001" stroke="#3b88c3" stroke-width="1.6"/><path d="M174.500000000000003 799.500000000000001l3.500000000000001-1.5.2 3.500000000000001-2.2 1z" fill="#3b88c3"/>
<!-- steam face -->
<path d="M182.8 808.500000000000001a8 8.200000000000001 0 1 1 16 0c0 3.500000000000001-1.500000000000001 6.500000000000001-4 6.500000000000001h-8c-2.500000000000001 0-4-3-4-6.500000000000001z" fill="#fcc21b" stroke="#2b2410" stroke-width="1.2"/>
<path d="M186 805.8l3.200000000000001 1.2M195.6 805.8l-3.200000000000001 1.2" stroke="#2b2410" stroke-width="1.2"/>
<path d="M189.3 810.6h3" stroke="#2b2410" stroke-width="1.2"/>
<path d="M184 812.500000000000001c1.500000000000001-1 3.500000000000001-.5 4.200000000000001 1 .8 1.500000000000001.2 2.500000000000001-1.200000000000001 2.500000000000001h-3c-1.500000000000001 0-1.500000000000001-2.500000000000001 0-3.500000000000001zM197.6 812.500000000000001c-1.500000000000001-1-3.500000000000001-.5-4.200000000000001 1-.8 1.500000000000001-.2 2.500000000000001 1.200000000000001 2.500000000000001h3c1.500000000000001 0 1.500000000000001-2.500000000000001 0-3.500000000000001z" fill="#fff"/>
<!-- sunglasses face -->
<circle cx="85.6" cy="825.2" r="7.8" fill="#fcc21b" stroke="#2b2410" stroke-width="1.2"/>
<path transform="translate(0 -1.3)" d="M78.4 822.2h14.4l-.6 3.600000000000001c-.3 1.4-1.500000000000001 2-3 2h-1c-1.500000000000001 0-2.300000000000001-1-2.600000000000001-2.600000000000001-.3 1.600000000000001-1.1 2.600000000000001-2.600000000000001 2.600000000000001h-1c-1.500000000000001 0-2.700000000000001-.6-3-2z" fill="#2b2410"/>
<path d="M81.6 828.4c2.300000000000001 2.600000000000001 5.700000000000001 2.600000000000001 8.000000000000002 0" stroke="#2b2410" stroke-width="1.2" fill="none"/>
<text x="105.6" y="830" font-family="Liberation Sans, sans-serif" font-size="13.5" fill="#4c6a8a" stroke="#4c6a8a" stroke-width=".35" text-anchor="middle" textLength="17.5" lengthAdjust="spacingAndGlyphs">€$</text>
</svg>
</div>

<!-- filmstrip scrollbar -->
<div class="a" style="left:255px;top:247.5px;width:10px;height:469px;border-radius:5px;background:#dadce0"></div>
<!-- bottom-left controls -->
<svg style="left:29.5px;top:935.5px;width:23.5px;height:23.5px" viewBox="0 0 24 24" fill="#444746"><path d="M3 3v8h8V3H3zm6 6H5V5h4v4zm-6 4v8h8v-8H3zm6 6H5v-4h4v4zm4-16v8h8V3h-8zm6 6h-4V5h4v4zm-6 4v8h8v-8h-8zm6 6h-4v-4h4v4z"/></svg>
<svg style="left:89.8px;top:936.4px;width:24px;height:24px" viewBox="0 0 24 24" fill="#444746"><path d="M15.41 7.41L14 6l-6 6 6 6 1.41-1.41L10.83 12z"/></svg>
<!-- ===== Right-side widgets & window edge ===== -->
<!-- side panel toggle -->
<div class="a" style="left:1886px;top:934px;width:50px;height:50px;border-radius:25px;background:#fff;box-shadow:0 1px 3px rgba(60,64,67,.3),0 2px 6px rgba(60,64,67,.15)"></div>
<svg style="left:1891.2px;top:946.5px;width:25px;height:25px" viewBox="0 0 24 24" fill="#444746"><path d="M15.41 7.41L14 6l-6 6 6 6 1.41-1.41L10.83 12z"/></svg>
<!-- antivirus widget -->
<div class="a" style="left:1884px;top:671px;width:40px;height:59px;border:2px solid #92c140;border-radius:7px;background:#efeff1"></div>
<svg style="left:1891px;top:679px;width:18px;height:18px" viewBox="-9 -9 18 18"><circle r="8.1" fill="#222"/><path d="M-3.7-3.7 3.7 3.7M3.7-3.7-3.7 3.7" stroke="#fff" stroke-width="3.1" stroke-linecap="butt"/></svg>
<svg style="left:1890.2px;top:703px;width:20px;height:20px" viewBox="0 0 20 20"><rect x="1.1" y="1.1" width="17.6" height="17.4" rx="6.4" fill="#f2fbfb" stroke="#12868c" stroke-width="2"/></svg>
<span class="t" style="left:1894.6px;top:701.6px;font-size:18.5px;line-height:20px;font-weight:700;color:#12868c;-webkit-text-stroke:0.4px #12868c">e</span>
<!-- window edge -->
<div class="a" style="left:1914px;top:0;width:2px;height:992px;background:#92c140"></div>
<div class="a" style="left:0;top:990.4px;width:1916px;height:1.6px;background:#92c140"></div>
</body>
</html>
